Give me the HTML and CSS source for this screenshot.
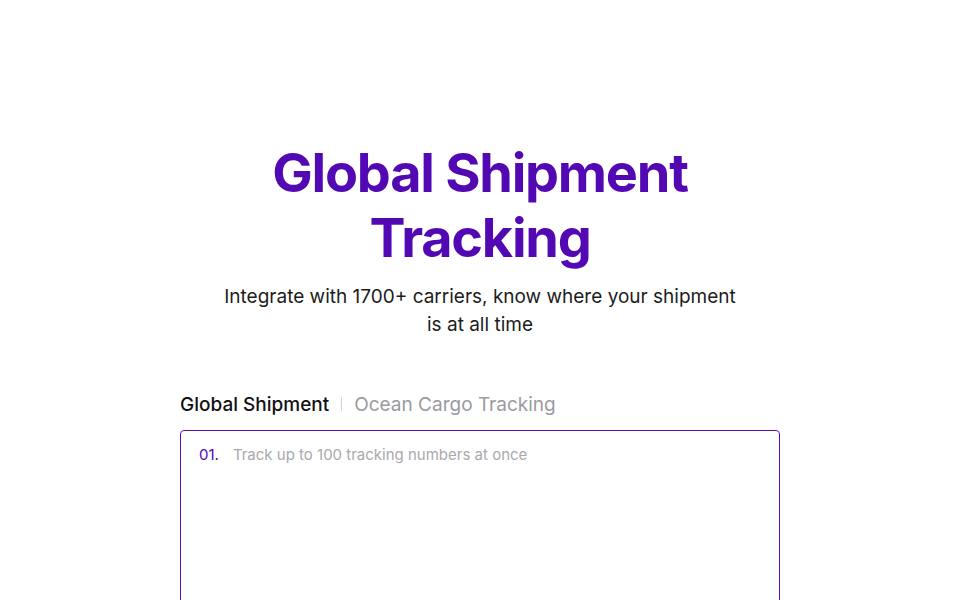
FILE: index.html
```html
<!DOCTYPE html>
<html>
<head>
<meta charset="utf-8">
<link rel="stylesheet" href="styles.css">
</head>
<body>
<main class="hero">
  <h1 class="title">Global Shipment<br>Tracking</h1>
  <p class="subtitle">Integrate with 1700+ carriers, know where your shipment<br>is at all time</p>
  <section class="tracker">
    <div class="tabs">
      <span class="tab active">Global Shipment</span>
      <span class="sep"></span>
      <span class="tab">Ocean Cargo Tracking</span>
    </div>
    <div class="box">
      <span class="num">01.</span>
      <span class="placeholder">Track up to 100 tracking numbers at once</span>
    </div>
  </section>
</main>
</body>
</html>
```
FILE: styles.css
```css
html, body {
  margin: 0;
  padding: 0;
  background: #fff;
}
body {
  font-family: "Inter", "Noto Sans", sans-serif;
  color: #1a1a1a;
  height: 600px;
  overflow: hidden;
}
.hero {
  display: flex;
  flex-direction: column;
  align-items: center;
  padding-top: 140px;
}
.title {
  margin: 0;
  font-size: 54px;
  line-height: 65px;
  font-weight: 700;
  color: #5208b3;
  text-align: center;
  letter-spacing: -1.25px;
}
.subtitle {
  margin: 13px 0 0;
  font-size: 19px;
  line-height: 28px;
  text-align: center;
  color: #1c1c1c;
}
.tracker {
  width: 600px;
  margin-top: 51px;
}
.tabs {
  display: flex;
  align-items: center;
  gap: 12px;
  height: 28px;
}
.tab {
  font-size: 19px;
  color: #9a9aa0;
}
.tab.active {
  color: #111;
  font-weight: 500;
}
.sep {
  width: 1px;
  height: 14px;
  background: #d4d4d8;
}
.box {
  margin-top: 12px;
  height: 200px;
  border: 1px solid #5b11b0;
  border-radius: 4px;
  padding: 14px 18px;
  display: flex;
  gap: 14px;
  font-size: 15px;
  line-height: 20px;
}
.num {
  color: #5208b3;
}
.placeholder {
  color: #a9a9ae;
}
```
